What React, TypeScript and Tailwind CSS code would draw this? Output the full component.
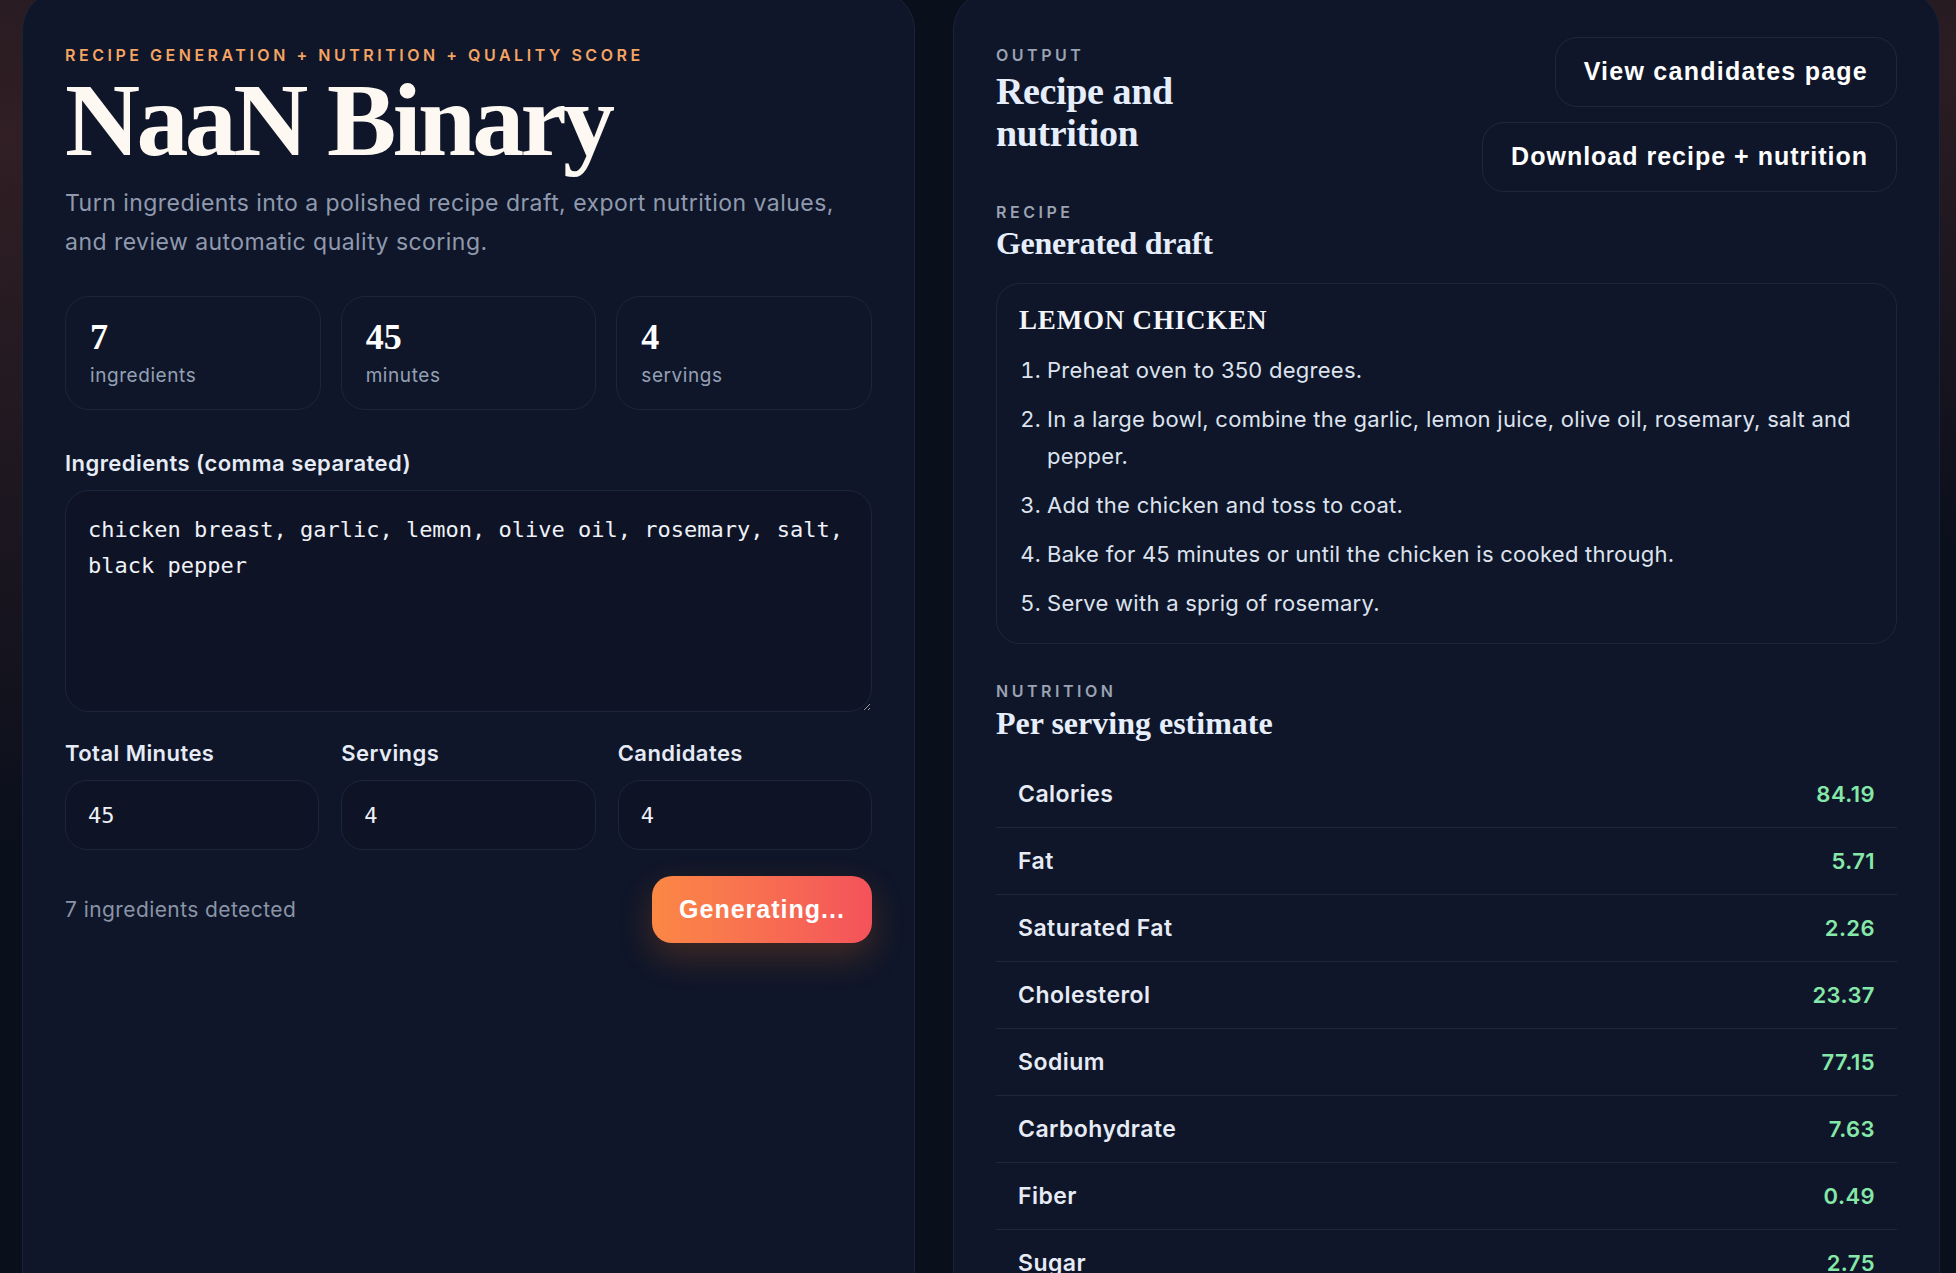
import React from "react";

const serif = "font-['Liberation_Serif',serif]";
const sans = "font-['Inter',sans-serif]";
const heavy = "font-['Liberation_Sans',Arial,sans-serif]";
const mono = "font-['DejaVu_Sans_Mono',monospace]";

const stats = [
  { value: "7", label: "ingredients" },
  { value: "45", label: "minutes" },
  { value: "4", label: "servings" },
];

const fields = [
  { label: "Total Minutes", value: "45" },
  { label: "Servings", value: "4" },
  { label: "Candidates", value: "4" },
];

const steps = [
  "Preheat oven to 350 degrees.",
  "In a large bowl, combine the garlic, lemon juice, olive oil, rosemary, salt and pepper.",
  "Add the chicken and toss to coat.",
  "Bake for 45 minutes or until the chicken is cooked through.",
  "Serve with a sprig of rosemary.",
];

const nutrition = [
  { name: "Calories", value: "84.19" },
  { name: "Fat", value: "5.71" },
  { name: "Saturated Fat", value: "2.26" },
  { name: "Cholesterol", value: "23.37" },
  { name: "Sodium", value: "77.15" },
  { name: "Carbohydrate", value: "7.63" },
  { name: "Fiber", value: "0.49" },
  { name: "Sugar", value: "2.75" },
  { name: "Protein", value: "9.12" },
];

function Eyebrow({ children, orange }: { children: React.ReactNode; orange?: boolean }) {
  return (
    <p
      className={`${sans} text-[16px] leading-[20px] font-semibold uppercase tracking-[0.22em] ${
        orange ? "text-[#f4a463]" : "text-[#9aa3b2]"
      }`}
    >
      {children}
    </p>
  );
}

export default function App() {
  return (
    <div className="min-h-screen bg-[#0a0f1c] bg-[radial-gradient(circle_at_0%_10%,rgba(120,60,50,0.35),transparent_30%),radial-gradient(circle_at_100%_5%,rgba(120,60,50,0.3),transparent_20%)] pl-[22px] pr-[16px] pb-10">
      <div className="-mt-[10px] grid grid-cols-[893px_987px] gap-[38px]">
        {/* left: input panel */}
        <section className="rounded-[40px] border border-[#1b2336] bg-[#0f1629] px-[42px] pt-[54px] pb-16">
          <Eyebrow orange>Recipe generation + nutrition + quality score</Eyebrow>
          <h1
            className={`${serif} mt-[5px] text-[104px] leading-[100px] font-bold tracking-[-0.035em] text-[#fdf8f1]`}
          >
            NaaN Binary
          </h1>
          <p className={`${sans} mt-[14px] text-[23px] leading-[39px] tracking-[0.02em] text-[#8f9aae]`}>
            Turn ingredients into a polished recipe draft, export nutrition values,
            <br />
            and review automatic quality scoring.
          </p>

          <div className="mt-[34px] grid grid-cols-3 gap-[20px]">
            {stats.map((s) => (
              <div key={s.label} className="h-[114px] rounded-[24px] border border-[#1d2538] px-[24px] pt-[22px]">
                <div className={`${serif} text-[36px] leading-[36px] font-bold text-white`}>{s.value}</div>
                <div className={`${sans} mt-[9px] text-[19px] leading-[24px] tracking-[0.03em] text-[#94a0b4]`}>
                  {s.label}
                </div>
              </div>
            ))}
          </div>

          <label
            className={`${sans} mt-[39px] block text-[22px] leading-[28px] font-semibold tracking-[0.02em] text-[#e6ebf5]`}
          >
            Ingredients (comma separated)
          </label>
          <textarea
            readOnly
            value="chicken breast, garlic, lemon, olive oil, rosemary, salt, black pepper"
            className={`${mono} mt-[13px] block h-[222px] w-full resize-y rounded-[24px] border border-[#1d2538] bg-[#0e1426] px-[22px] pt-[21px] text-[22px] leading-[36px] text-[#eef1f7] outline-none`}
          />

          <div className="mt-[27px] grid grid-cols-3 gap-[22px]">
            {fields.map((f) => (
              <div key={f.label}>
                <div className={`${sans} text-[22px] leading-[28px] font-semibold tracking-[0.02em] text-[#e6ebf5]`}>
                  {f.label}
                </div>
                <div
                  className={`${mono} mt-[13px] flex h-[70px] items-center rounded-[22px] border border-[#1d2538] bg-[#0e1426] px-[22px] text-[22px] text-[#eef1f7]`}
                >
                  {f.value}
                </div>
              </div>
            ))}
          </div>

          <div className="mt-[26px] flex items-center justify-between">
            <span className={`${sans} text-[21px] tracking-[0.02em] text-[#8a94a6]`}>7 ingredients detected</span>
            <button
              className={`${heavy} flex h-[67px] w-[220px] items-center justify-center rounded-[20px] bg-gradient-to-r from-[#fb8744] to-[#f4525a] text-[25px] font-bold tracking-[0.04em] text-white shadow-[0_14px_34px_rgba(249,115,22,0.22)]`}
            >
              Generating...
            </button>
          </div>
        </section>

        {/* right: output panel */}
        <section className="rounded-[40px] border border-[#1b2336] bg-[#0f1629] px-[42px] pt-[46px] pb-16">
          <div className="flex items-start justify-between">
            <div className="pt-[8px]">
              <Eyebrow>Output</Eyebrow>
              <h2
                className={`${serif} mt-[5px] max-w-[240px] text-[38px] leading-[42px] font-bold tracking-[-0.01em] text-[#e6eefc]`}
              >
                Recipe and nutrition
              </h2>
            </div>
            <div className="flex flex-col items-end gap-[15px]">
              <button
                className={`${heavy} h-[70px] rounded-[22px] border border-[#1f283b] px-[28px] text-[25px] font-bold tracking-[0.05em] text-white`}
              >
                View candidates page
              </button>
              <button
                className={`${heavy} h-[70px] rounded-[22px] border border-[#1f283b] px-[28px] text-[25px] font-bold tracking-[0.04em] text-white`}
              >
                Download recipe + nutrition
              </button>
            </div>
          </div>

          <div className="mt-[10px]">
            <Eyebrow>Recipe</Eyebrow>
            <h3 className={`${serif} mt-[3px] text-[32px] leading-[36px] font-bold tracking-[-0.01em] text-[#e6eefc]`}>
              Generated draft
            </h3>
          </div>

          <div className="mt-[22px] rounded-[24px] border border-[#1d2538] px-[22px] pt-[20px] pb-[21px]">
            <h4 className={`${serif} text-[27px] leading-[32px] font-bold uppercase tracking-[0.03em] text-[#f3f5fa]`}>
              Lemon Chicken
            </h4>
            <ol
              className={`${sans} mt-[16px] list-decimal space-y-[12px] pl-[28px] text-[22px] leading-[37px] tracking-[0.012em] text-[#dde3ee]`}
            >
              {steps.map((s) => (
                <li key={s}>{s}</li>
              ))}
            </ol>
          </div>

          <div className="mt-[37px]">
            <Eyebrow>Nutrition</Eyebrow>
            <h3 className={`${serif} mt-[4px] text-[32px] leading-[36px] font-bold text-[#e6eefc]`}>
              Per serving estimate
            </h3>
          </div>

          <div className="mt-[20px]">
            {nutrition.map((n) => (
              <div
                key={n.name}
                className="flex h-[67px] items-center justify-between border-b border-[#1f2739] px-[22px]"
              >
                <span className={`${sans} text-[23px] font-semibold tracking-[0.02em] text-[#e6ebf5]`}>{n.name}</span>
                <span className={`${sans} text-[22px] font-semibold tracking-[0.02em] text-[#86e8a8]`}>{n.value}</span>
              </div>
            ))}
          </div>
        </section>
      </div>
    </div>
  );
}
